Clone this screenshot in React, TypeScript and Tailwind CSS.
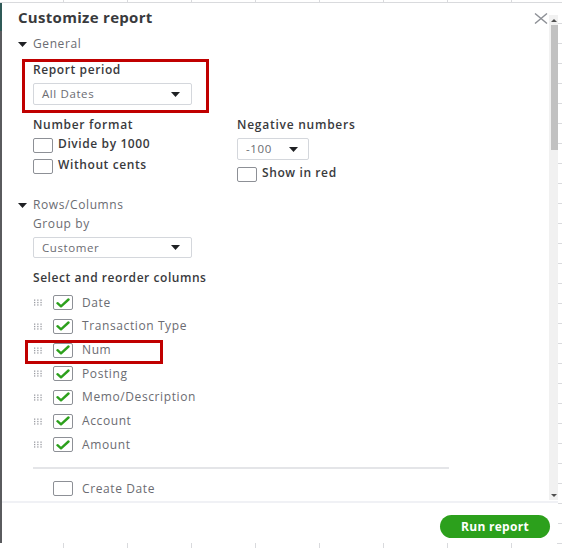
import React from 'react';

const font = { fontFamily: '"Open Sans", "Liberation Sans", sans-serif' };

const columns = ['Date', 'Transaction Type', 'Num', 'Posting', 'Memo/Description', 'Account', 'Amount'];

const Caret = () => (
  <svg width="9" height="5" viewBox="0 0 9 5" className="shrink-0">
    <path d="M0 0 L9 0 L4.5 5 Z" fill="#1f2124" />
  </svg>
);

const DragHandle = () => (
  <svg width="10" height="7" viewBox="0 0 10 7" className="shrink-0">
    {[0, 1, 2].map((r) =>
      [0, 1, 2].map((c) => (
        <rect key={`${r}-${c}`} x={1 + c * 3.2} y={0.5 + r * 2.4} width="1.3" height="1.3" fill="#9a9ca2" />
      ))
    )}
  </svg>
);

const Checkbox = ({ checked = false }: { checked?: boolean }) => (
  <div className="w-[20px] h-[15px] shrink-0 border border-[#8d9096] rounded-[2px] bg-white flex items-center justify-center">
    {checked && (
      <svg width="14" height="10" viewBox="0 0 14 10">
        <path d="M1.5 5.2 L5 8.3 L12.5 1.5" fill="none" stroke="#2ca01c" strokeWidth="2.4" strokeLinecap="round" strokeLinejoin="round" />
      </svg>
    )}
  </div>
);

const Select = ({ value, className }: { value: string; className: string }) => (
  <div className={`border border-[#d4d7dc] rounded-[2px] bg-white flex items-center justify-between pl-[8px] pr-[11px] ${className}`}>
    <span className="text-[11.5px] tracking-[0.6px] text-[#6b6c72]">{value}</span>
    <Caret />
  </div>
);

const Section = ({ label }: { label: string }) => (
  <div className="h-[18px] flex items-center gap-[6px]">
    <Caret />
    <span className="text-[12px] tracking-[0.6px] text-[#6b6c72]">{label}</span>
  </div>
);

export default function App() {
  const gridX = [63, 127, 191, 255, 319, 383, 447, 511];
  const ticksY = Array.from({ length: 27 }, (_, i) => 23 + i * 20);

  return (
    <div className="relative w-[562px] h-[548px] bg-white overflow-hidden" style={font}>
      {/* page grid behind the dialog */}
      <div className="absolute left-0 right-0 top-[2px] h-px bg-[#d9dadd]" />
      {gridX.map((x) => (
        <div key={`t-${x}`} className="absolute top-0 w-px h-[3px] bg-[#d9dadd]" style={{ left: x }} />
      ))}
      {gridX.map((x) => (
        <div key={`b-${x}`} className="absolute bottom-0 w-px h-[5px] bg-[#d9dadd]" style={{ left: x }} />
      ))}
      {ticksY.map((y) => (
        <div key={`r-${y}`} className="absolute right-0 w-[5px] h-px bg-[#d9dadd]" style={{ top: y }} />
      ))}

      {/* dialog */}
      <div className="relative mt-[3px] w-[558px] h-[540px] flex bg-white">
        <div className="w-[2px] flex flex-col shrink-0">
          <div className="h-[28px] bg-[#2f5a57]" />
          <div className="flex-1 bg-[#5a5b5e]" />
        </div>

        <div className="flex-1 flex flex-col">
          <div className="h-[498px] flex">
            <div className="flex-1 pl-[16px] relative">
              {/* title */}
              <div className="h-[28px] flex items-center text-[15px] tracking-[0.3px] font-bold text-[#393a3d]">Customize report</div>

              <div className="mt-[4px]">
                <Section label="General" />
              </div>

              {/* report period, highlighted */}
              <div className="mt-[6px] ml-[4px] w-[187px] h-[54px] border-[3px] border-[#c00000] pl-[8px]">
                <div className="h-[16px] flex items-center text-[12px] tracking-[0.6px] font-semibold text-[#393a3d]">Report period</div>
                <Select value="All Dates" className="mt-[5px] w-[159px] h-[22px]" />
              </div>

              {/* number format */}
              <div className="mt-[4px] pl-[15px] flex">
                <div className="w-[204px]">
                  <div className="h-[16px] flex items-center text-[12px] tracking-[0.7px] font-semibold text-[#393a3d]">Number format</div>
                  <div className="mt-[3px]">
                    {['Divide by 1000', 'Without cents'].map((t) => (
                      <div key={t} className="h-[21px] flex items-start gap-[5px]">
                        <div className="mt-[2px]">
                          <Checkbox />
                        </div>
                        <span className="leading-[15px] text-[12px] tracking-[0.6px] font-semibold text-[#393a3d]">{t}</span>
                      </div>
                    ))}
                  </div>
                </div>
                <div>
                  <div className="h-[16px] flex items-center text-[12px] tracking-[0.75px] font-semibold text-[#393a3d]">Negative numbers</div>
                  <Select value="-100" className="mt-[5px] w-[72px] h-[22px] !pr-[10px]" />
                  <div className="mt-[5px] flex items-start gap-[5px]">
                    <div className="mt-[2px]">
                      <Checkbox />
                    </div>
                    <span className="leading-[15px] text-[12px] tracking-[0.6px] font-semibold text-[#393a3d]">Show in red</span>
                  </div>
                </div>
              </div>

              {/* rows / columns */}
              <div className="mt-[14px]">
                <Section label="Rows/Columns" />
              </div>
              <div className="pl-[15px]">
                <div className="mt-[2px] h-[16px] flex items-center text-[12px] tracking-[0.6px] text-[#6b6c72]">Group by</div>
                <Select value="Customer" className="mt-[5px] w-[159px] h-[21px]" />
                <div className="mt-[12px] h-[16px] flex items-center text-[12px] tracking-[0.55px] font-semibold text-[#393a3d]">
                  Select and reorder columns
                </div>
              </div>

              <div className="mt-[5px] relative">
                {columns.map((c) => (
                  <div key={c} className="h-[23.67px] pl-[15px] flex items-center">
                    <DragHandle />
                    <div className="ml-[10px]">
                      <Checkbox checked />
                    </div>
                    <span className="ml-[9px] text-[12px] tracking-[0.6px] text-[#6b6c72]">{c}</span>
                  </div>
                ))}
                <div className="absolute left-[7px] top-[49px] w-[138px] h-[24px] border-[3px] border-[#c00000]" />
              </div>

              <div className="mt-[10px] ml-[15px] w-[416px] h-[2px] bg-[#e4e5e8]" />

              <div className="mt-[8px] h-[24px] pl-[35px] flex items-center">
                <Checkbox />
                <span className="ml-[9px] text-[12px] tracking-[0.6px] text-[#6b6c72]">Create Date</span>
              </div>

              {/* close */}
              <svg className="absolute right-[1px] top-[10px]" width="14" height="11" viewBox="0 0 14 11">
                <path d="M1 0.5 L13 10.5 M13 0.5 L1 10.5" stroke="#8d9096" strokeWidth="1.4" />
              </svg>
            </div>

            {/* scrollbar */}
            <div className="w-[9px] mt-[12px] mb-[1px] bg-[#f1f1f1] flex flex-col items-center">
              <div className="h-[10px] flex items-center justify-center">
                <svg width="6" height="3" viewBox="0 0 6 3">
                  <path d="M0 3 L6 3 L3 0 Z" fill="#505050" />
                </svg>
              </div>
              <div className="w-[7px] h-[125px] ml-[2px] bg-[#c1c1c1]" />
              <div className="flex-1" />
              <div className="h-[10px] flex items-center justify-center">
                <svg width="6" height="3" viewBox="0 0 6 3">
                  <path d="M0 0 L6 0 L3 3 Z" fill="#505050" />
                </svg>
              </div>
            </div>
          </div>

          {/* footer */}
          <div className="flex-1 border-t-2 border-[#f0f1f5] flex justify-end items-start pt-[12px] pr-[8px]">
            <div className="w-[110px] h-[23px] rounded-full bg-[#2ca01c] flex items-center justify-center text-white text-[12px] tracking-[0.3px] font-bold">
              Run report
            </div>
          </div>
        </div>
      </div>
    </div>
  );
}
